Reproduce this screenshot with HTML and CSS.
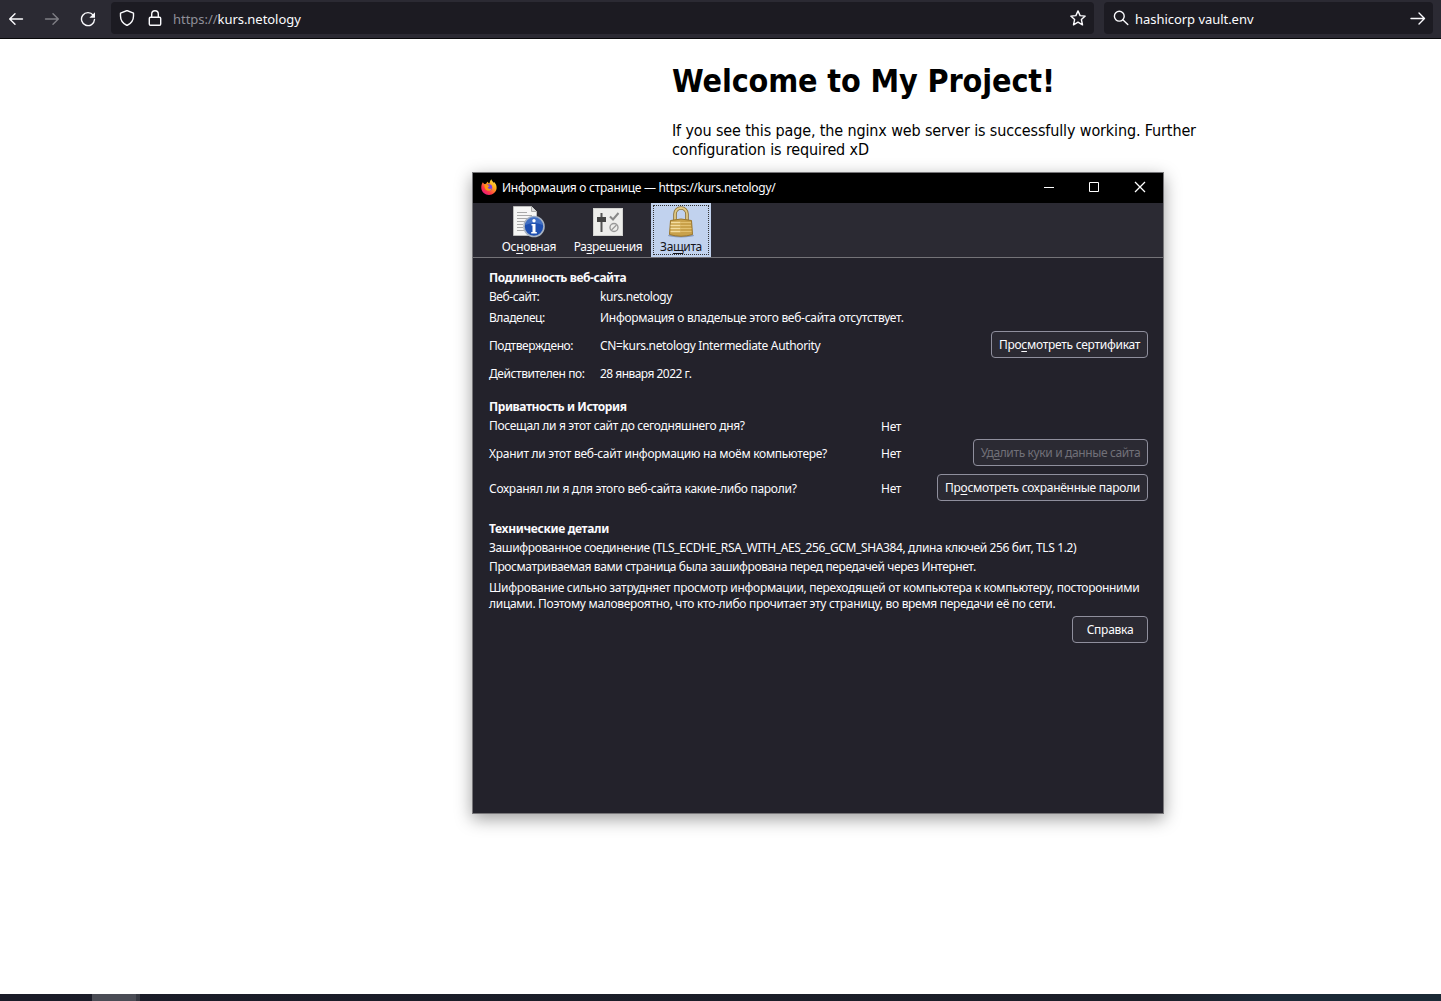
FILE: index.html
```html
<!DOCTYPE html>
<html lang="ru">
<head>
<meta charset="utf-8">
<title>Welcome to My Project!</title>
<link rel="stylesheet" href="styles.css">
</head>
<body>
<header class="navbar">
  <div class="nav-buttons">
    <svg class="icon" viewBox="0 0 16 16"><path d="M14.5 8H1.8M7 2.7 1.7 8 7 13.3"/></svg>
    <svg class="icon dim" viewBox="0 0 16 16"><path d="M1.500 8h12.700M9 2.700 14.300 8 9 13.300"/></svg>
    <svg class="icon" viewBox="0 0 16 16"><path d="M13.200 4.200A6.500 6.500 0 1 0 14.500 8.500"/><path class="solid" d="M15 1.200v5.600H9.400z"/></svg>
  </div>
  <div class="field url-field">
    <svg class="icon" viewBox="0 0 16 16"><path d="M8 .5 14.500 3.200V6c0 4.500-2.700 7.700-6.500 9.500C4.200 13.700 1.500 10.500 1.500 6V3.200z"/></svg>
    <svg class="icon" viewBox="0 0 16 16"><rect x="2.300" y="7.200" width="11.400" height="8.100" rx="1.200"/><path d="M4.700 7.200V4a3.300 3.300 0 0 1 6.600 0v3.200"/></svg>
    <span class="url"><span class="scheme">https://</span>kurs.netology</span>
    <svg class="icon star" viewBox="0 0 16 16"><path d="m8 .9 2.100 4.700 5.100.5-3.800 3.500 1.100 5.200L8 12.200l-4.500 2.600 1.100-5.200L.8 6.100l5.100-.5z"/></svg>
  </div>
  <div class="field search-field">
    <svg class="icon" viewBox="0 0 16 16"><circle cx="6.300" cy="6.200" r="4.900"/><path d="m9.800 9.800 5 4.700"/></svg>
    <span class="query">hashicorp vault.env</span>
    <svg class="icon go" viewBox="0 0 16 16"><path d="M1 8.500h13.500M9 3l5.500 5.500L9 14"/></svg>
  </div>
</header>

<main class="page">
  <h1>Welcome to My Project!</h1>
  <p>If you see this page, the nginx web server is successfully working. Further<br>configuration is required xD</p>
</main>

<section class="dialog">
  <div class="titlebar">
    <svg class="fox" viewBox="0 0 16 16">
      <defs>
        <linearGradient id="flame" x1="1" y1="0" x2="0.200" y2="1"><stop offset="0" stop-color="#fff44f"/><stop offset=".4" stop-color="#ffae1e"/><stop offset=".75" stop-color="#ff3647"/><stop offset="1" stop-color="#e31587"/></linearGradient>
      </defs>
      <path fill="url(#flame)" d="M1.800 3.200 3.200 5l1.900-.2C5.600 3.600 6.200 3 7 2.800c.1 1 .6 1.400 1.200 1.800C8.800 3.500 9 1.500 10.400.2c.2 1.500 1.400 2.300 2.400 3.500l.4-.7c1.700 1.800 2.600 3.800 2.400 6.200C15.200 13 12 15.900 8 15.900S.5 13 .3 8.900C.2 6.700.8 4.700 1.800 3.200z"/>
      <circle cx="8" cy="8.400" r="3.200" fill="#7542e5"/>
      <path fill="#ff980e" d="M3.600 5.800c1.600-.7 2.900-.2 3.800.7l1.300.3c-.3.900-1.400 1.100-1.900 1.800.5 1.500 2.600 1.700 3.900.7-.6 2.300-2.800 3-4.600 2.300-2-.8-3-3.400-2.500-5.800z"/>
    </svg>
    <span class="title">Информация о странице — https://kurs.netology/</span>
    <svg class="winbtn" viewBox="0 0 12 12"><path d="M2 6.500h10"/></svg>
    <svg class="winbtn" viewBox="0 0 12 12"><path d="M1.500 1.500h9v9h-9z"/></svg>
    <svg class="winbtn cross" viewBox="0 0 12 12"><path d="m1 1 10 10M11 1 1 11"/></svg>
  </div>

  <nav class="tabs">
    <div class="tab tab-general">
      <svg viewBox="0 0 32 32">
        <path d="M.5.500h18l5 5v24H.5z" fill="#f6f6f5" stroke="#bbb"/><path d="M18.500.500v5h5" fill="#ddd" stroke="#aaa"/>
        <path d="M4 6.500h10M4 9.500h15M4 12.500h12M4 15.500h8M4 18.500h6M4 21.500h6M4 24.500h7" stroke="#a9a9a9"/>
        <circle cx="21" cy="20.500" r="10" fill="#1e4fb0" stroke="#a8b3c2" stroke-width="1.600"/>
        <path d="M12.500 19a8.500 8.500 0 0 1 17 0q-8-4-17 0z" fill="#5c8bd5" opacity=".55"/>
        <circle cx="21" cy="14.800" r="1.700" fill="#fff"/><path d="M18.500 18h4v8h1.300v1.500h-5.600V26h1.300v-6.500h-1z" fill="#fff"/>
      </svg>
      <span>Ос<u>н</u>овная</span>
    </div>
    <div class="tab tab-permissions">
      <svg viewBox="0 0 32 32">
        <rect x="1.500" y="2.500" width="29" height="27" fill="#ededeb" stroke="#d2d2d0"/>
        <path d="M9.500 7v19" stroke="#555" stroke-width="2"/><rect x="5" y="11" width="9" height="5" fill="#444"/>
        <path d="m18 10.500 3 3L26.500 7" fill="none" stroke="#888" stroke-width="2"/>
        <circle cx="22" cy="21.500" r="4" fill="none" stroke="#999" stroke-width="1.400"/><path d="m19.500 24 5-5" stroke="#999" stroke-width="1.300"/>
      </svg>
      <span>Ра<u>з</u>решения</span>
    </div>
    <div class="tab tab-security">
      <svg viewBox="0 0 32 32">
        <ellipse cx="16" cy="29.500" rx="13" ry="1.900" fill="#7184a8" opacity=".7"/>
        <path d="M10 15V8a6 6 0 0 1 12 0v7" fill="none" stroke="#8c7136" stroke-width="3.600"/>
        <path d="M10 15V8a6 6 0 0 1 12 0v7" fill="none" stroke="#dfc884" stroke-width="1.800"/>
        <path d="M5.500 14.500q10.500-3 21 0l1 14q-11.500 3.500-23 0z" fill="#c9a14a" stroke="#9b762b"/>
        <path d="M6 16.500h9.500M5.500 19.500h10M5.500 22.500h10M5.500 25.500h10" stroke="#f4dda0" stroke-width="1.600"/>
        <path d="M15.500 16.500H26M15.500 19.500H26M15.500 22.500h11M15.500 25.500h11" stroke="#e2c071" stroke-width="1.200"/>
      </svg>
      <span>За<u>щ</u>ита</span>
    </div>
  </nav>

  <div class="content">
    <h2>Подлинность веб-сайта</h2>
    <div class="row site"><span class="key">Веб-сайт:</span><span class="tight">kurs.netology</span></div>
    <div class="row owner"><span class="key">Владелец:</span><span>Информация о владельце этого веб-сайта отсутствует.</span></div>
    <div class="row verifier"><span class="key">Подтверждено:</span><span class="authority">CN=kurs.netology Intermediate Authority</span><button class="view-cert">Про<u>с</u>мотреть сертификат</button></div>
    <div class="row valid"><span class="key">Действителен по:</span><span class="date">28 января 2022 г.</span></div>

    <h2 class="history">Приватность и История</h2>
    <div class="row visited"><span class="question">Посещал ли я этот сайт до сегодняшнего дня?</span><span class="answer">Нет</span></div>
    <div class="row cookies"><span class="question">Хранит ли этот веб-сайт информацию на моём компьютере?</span><span class="answer">Нет</span><button class="clear-data" disabled>Уд<u>а</u>лить куки и данные сайта</button></div>
    <div class="row passwords"><span class="question">Сохранял ли я для этого веб-сайта какие-либо пароли?</span><span class="answer">Нет</span><button class="view-passwords">Пр<u>о</u>смотреть сохранённые пароли</button></div>

    <h2 class="technical">Технические детали</h2>
    <div class="row cipher">Зашифрованное соединение (TLS_ECDHE_RSA_WITH_AES_256_GCM_SHA384, длина ключей 256 бит, TLS 1.2)</div>
    <div class="row sent">Просматриваемая вами страница была зашифрована перед передачей через Интернет.</div>
    <p class="note">Шифрование сильно затрудняет просмотр информации, переходящей от компьютера к компьютеру, посторонними<br>лицами. Поэтому маловероятно, что кто-либо прочитает эту страницу, во время передачи её по сети.</p>
    <div class="help"><button class="help-button">Справка</button></div>
  </div>
</section>

<footer class="taskbar"><div class="task"></div><div class="task-edge"></div></footer>
</body>
</html>
```

FILE: styles.css
```css
* { box-sizing: border-box; }
body {
  margin: 0; height: 1001px; overflow: hidden; display: flex; flex-direction: column;
  background: #fff; color: #000; font-family: "Noto Sans", "Open Sans", sans-serif;
}
.navbar {
  height: 39px; flex: none; display: flex; align-items: flex-start; padding: 2px 8px 0;
  background: #2b2a33; border-bottom: 1px solid #08080a; color: #fbfbfe;
}
.icon { width: 16px; height: 16px; flex: none; fill: none; stroke: #fbfbfe; stroke-width: 1.4; stroke-linecap: round; stroke-linejoin: round; }
.icon .solid { fill: #fbfbfe; stroke: none; }
.dim { opacity: .4; }
.nav-buttons { width: 103px; height: 33px; display: flex; align-items: center; gap: 20px; }
.field { height: 32px; display: flex; align-items: center; background: #1c1b22; border-radius: 4px; font-size: 13px; line-height: 18px; letter-spacing: -.04px; white-space: nowrap; }
.url-field { width: 983px; padding: 0 8px; gap: 12px; }
.url { padding-top: 2px; margin-left: -2px; }
.scheme { color: #8f8f98; }
.star { margin-left: auto; }
.search-field { width: 329px; margin-left: 10px; padding: 0 7px 0 9px; gap: 6px; }
.query { padding-top: 2px; }
.go { margin-left: auto; }

.page { flex: 1; padding: 23px 0 0 672px; white-space: nowrap; font-family: "DejaVu Sans Condensed", "DejaVu Sans", sans-serif; font-stretch: condensed; }
.page h1 { margin: 0 0 20px; font-size: 32px; line-height: 39px; letter-spacing: -.13px; }
.page p { margin: 0; font-size: 16px; line-height: 19px; letter-spacing: -.13px; }

.dialog {
  position: absolute; left: 472px; top: 172px; width: 692px; height: 642px;
  border: 1px solid #777679; background: #23222b; color: #fbfbfe;
  font-size: 12px; line-height: 16px; letter-spacing: -.28px; white-space: nowrap;
  box-shadow: 0 5px 16px rgba(0,0,0,.38);
}
.titlebar { height: 30px; display: flex; align-items: center; padding: 0 17px 0 8px; background: #000; }
.fox { width: 16px; height: 16px; margin: 0 5px 2px 0; }
.title { flex: 1; }
.winbtn { width: 12px; height: 12px; margin: 0 0 2px 34px; fill: none; stroke: #fff; stroke-width: 1; }
.cross { stroke-width: 1.3; }
.tabs { height: 55px; display: flex; padding-left: 20px; background: #2b2a33; border-bottom: 1px solid #747378; letter-spacing: -.38px; }
.tab { display: flex; flex-direction: column; align-items: center; padding-top: 3px; }
.tab svg { width: 32px; height: 32px; margin-bottom: 1px; flex: none; }
.tab-general { width: 72px; }
.tab-permissions { width: 86px; }
.tab-security { width: 60px; height: 54px; background: #c1d2ee; color: #15141a; outline: 1px dotted #333; outline-offset: -3px; }
u { text-decoration: underline; text-underline-offset: 2px; text-decoration-thickness: 1px; text-decoration-skip-ink: none; }

.content { padding: 10px 15px 0 16px; }
h2 { margin: 0; height: 20px; font-size: 12px; line-height: 20px; letter-spacing: -.42px; }
.row { display: flex; align-items: center; }
.key { width: 111px; letter-spacing: -.43px; }
.tight { letter-spacing: -.42px; }
.authority { letter-spacing: -.34px; }
.date { letter-spacing: -.53px; }
.question { width: 392px; }
.site, .visited, .cipher { height: 18px; }
.visited .question { letter-spacing: -.33px; }
.visited .answer { padding-top: 2px; }
.owner { height: 24px; }
.verifier { height: 31px; }
.valid { height: 26px; }
.history { margin-top: 10px; }
.cookies { height: 37px; }
.passwords { height: 33px; }
.technical { margin-top: 14px; letter-spacing: -.33px; }
.cipher { letter-spacing: -.37px; }
.sent { height: 20px; letter-spacing: -.4px; }
.note { margin: 3px 0 4px; letter-spacing: -.3px; }
button {
  height: 27px; margin: 0 0 2px auto; padding: 0; flex: none; font: inherit; letter-spacing: -.27px; color: #fbfbfe;
  background: #2b2a33; border: 1px solid #8f8f9d; border-radius: 4px;
}
button:disabled { color: #717078; letter-spacing: -.37px; }
.view-cert { width: 157px; }
.clear-data { width: 175px; }
.view-passwords { width: 211px; }
.help-button { width: 76px; }
.help { display: flex; }

.taskbar { height: 7px; flex: none; display: flex; padding-left: 92px; background: linear-gradient(90deg, #1a1c28 0%, #1b1f29 80%, #1b2a38 88%, #1b2a36 100%); }
.task { width: 44px; background: #4a4c55; }
.task-edge { width: 4px; background: #363841; }
```
